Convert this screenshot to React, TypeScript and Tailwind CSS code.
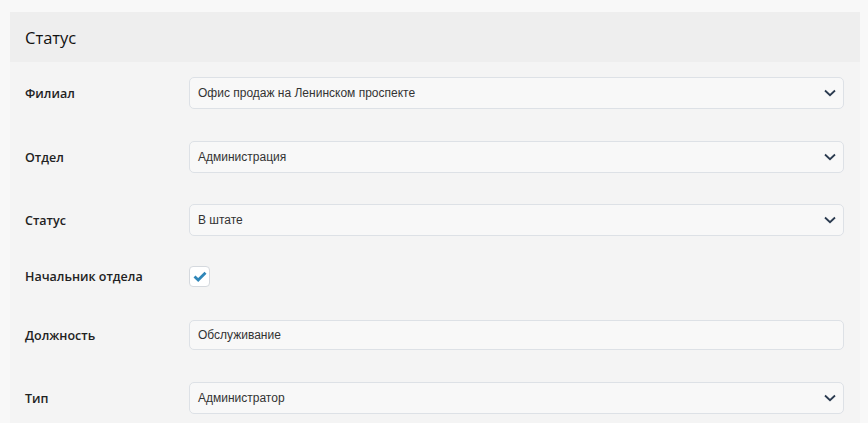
import { ReactNode } from 'react';

const Chevron = () => (
    <svg width="12" height="8" viewBox="0 0 12 8" className="shrink-0">
        <path d="M1 1.5 L6 6.2 L11 1.5" fill="none" stroke="#2a3a4f" strokeWidth="1.8" />
    </svg>
);

function Row({ label, className, children }: { label: string; className: string; children: ReactNode }) {
    return (
        <div className={`flex items-center ${className}`}>
            <div className="w-[179px] shrink-0 pl-[15px] pt-[2px] text-[12.5px] font-semibold text-[#222]">{label}</div>
            <div className="flex-1 pr-[16px]">{children}</div>
        </div>
    );
}

function Select({ value }: { value: string }) {
    return (
        <div className="flex h-[32px] items-center justify-between rounded-[5px] border border-[#dde1e6] bg-[#f8f8f8] pl-[8px] pr-[7px]">
            <span className="font-['Liberation_Sans',Arial,sans-serif] text-[12px] text-[#333]">{value}</span>
            <Chevron />
        </div>
    );
}

export default function App() {
    return (
        <div className="min-h-screen bg-[#f8f8f8] pl-[10px] pr-[8px] pt-[12px] font-['Open_Sans',sans-serif]">
            <div className="min-h-[411px] bg-[#f4f4f4] pb-[12px]">
                <div className="flex h-[50px] items-center bg-[#eeeeee] pl-[15px] pt-[2px] text-[16.5px] text-[#111]">Статус</div>

                <Row label="Филиал" className="mt-[15px] h-[32px]">
                    <Select value="Офис продаж на Ленинском проспекте" />
                </Row>
                <Row label="Отдел" className="mt-[32px] h-[32px]">
                    <Select value="Администрация" />
                </Row>
                <Row label="Статус" className="mt-[31px] h-[32px]">
                    <Select value="В штате" />
                </Row>
                <Row label="Начальник отдела" className="mt-[24px] h-[32px]">
                    <div className="flex h-[21px] w-[21px] items-center justify-center rounded-[4px] border border-[#d5d9de] bg-white">
                        <svg width="14" height="11" viewBox="0 0 14 11">
                            <path d="M1.5 5.5 L5.2 9 L12.5 1.8" fill="none" stroke="#2f86b8" strokeWidth="2.8" />
                        </svg>
                    </div>
                </Row>
                <Row label="Должность" className="mt-[28px] h-[30px]">
                    <div className="flex h-[30px] items-center rounded-[5px] border border-[#dde1e6] bg-[#f8f8f8] pl-[8px]">
                        <span className="font-['Liberation_Sans',Arial,sans-serif] text-[12px] text-[#333]">Обслуживание</span>
                    </div>
                </Row>
                <Row label="Тип" className="mt-[32px] h-[32px]">
                    <Select value="Администратор" />
                </Row>
            </div>
        </div>
    );
}
